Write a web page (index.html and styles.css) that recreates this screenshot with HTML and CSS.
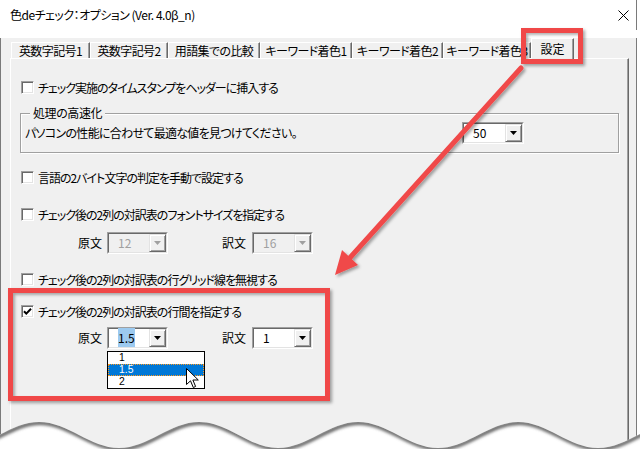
FILE: index.html
```html
<!DOCTYPE html>
<html lang="ja">
<head>
<meta charset="utf-8">
<link rel="stylesheet" href="styles.css">
</head>
<body>
<div class="window">
  <div class="titlebar">
    <span class="title">色deチェック：オプション (Ver. 4.0β_n)</span>
    <svg class="close" width="11" height="11" viewBox="0 0 11 11"><path d="M0.5 0.5L10.5 10.5M10.5 0.5L0.5 10.5" stroke="#000" stroke-width="1" fill="none"/></svg>
  </div>
  <div class="client">
    <div class="tabstrip">
      <div class="tab w79">英数字記号1</div>
      <div class="tab w78">英数字記号2</div>
      <div class="tab w92">用語集での比較</div>
      <div class="tab w92">キーワード着色1</div>
      <div class="tab w91">キーワード着色2</div>
      <div class="tab w88">キーワード着色3</div>
      <div class="tab sel w43">設定</div>
    </div>
    <div class="panel">
      <div class="cb r1"><span class="box"></span><span class="lbl">チェック実施のタイムスタンプをヘッダーに挿入する</span></div>
      <div class="group">
        <span class="legend">処理の高速化</span>
        <span class="gtext">パソコンの性能に合わせて最適な値を見つけてください。</span>
        <div class="combo w62"><div class="inner"><span class="val">50</span><span class="btn"><svg width="7" height="4" viewBox="0 0 7 4"><path d="M0 0H7L3.5 4Z" fill="#000"/></svg></span></div></div>
      </div>
      <div class="cb r3"><span class="box"></span><span class="lbl">言語の2バイト文字の判定を手動で設定する</span></div>
      <div class="cb r4"><span class="box"></span><span class="lbl">チェック後の2列の対訳表のフォントサイズを指定する</span></div>
      <div class="opt o1">
        <span class="olbl">原文</span>
        <div class="combo dis"><div class="inner"><span class="val">12</span><span class="btn"><svg width="7" height="4" viewBox="0 0 7 4"><path d="M0 0H7L3.5 4Z" fill="#a0a0a0"/></svg></span></div></div>
        <span></span>
        <span class="olbl">訳文</span>
        <div class="combo dis"><div class="inner"><span class="val">16</span><span class="btn"><svg width="7" height="4" viewBox="0 0 7 4"><path d="M0 0H7L3.5 4Z" fill="#a0a0a0"/></svg></span></div></div>
      </div>
      <div class="cb r5"><span class="box"></span><span class="lbl">チェック後の2列の対訳表の行グリッド線を無視する</span></div>
      <div class="cb r6"><span class="box"><svg width="11" height="11" viewBox="0 0 11 11"><path d="M2 5.2L4.3 7.6L9 2.8" stroke="#000" stroke-width="2" fill="none"/></svg></span><span class="lbl">チェック後の2列の対訳表の行間を指定する</span></div>
      <div class="opt o2">
        <span class="olbl">原文</span>
        <div class="combo open"><div class="inner"><span class="val"><span class="hl">1.5</span></span><span class="btn"><svg width="7" height="4" viewBox="0 0 7 4"><path d="M0 0H7L3.5 4Z" fill="#000"/></svg></span></div>
          <div class="list">
            <div class="item">1</div>
            <div class="item cur">1.5</div>
            <div class="item">2</div>
            <svg class="cursor" width="14" height="21" viewBox="0 0 14 21"><path d="M0.5 0.5V16.5L4.5 12.8L7.3 19.5L9.6 18.5L6.9 12H12.3Z" fill="#fff" stroke="#000" stroke-width="1" stroke-linejoin="miter"/></svg>
          </div>
        </div>
        <span></span>
        <span class="olbl">訳文</span>
        <div class="combo"><div class="inner"><span class="val">1</span><span class="btn"><svg width="7" height="4" viewBox="0 0 7 4"><path d="M0 0H7L3.5 4Z" fill="#000"/></svg></span></div></div>
      </div>
    </div>
  </div>

  <div class="redbox rb-tab"></div>
  <div class="redbox rb-main"></div>
  <svg class="overlay" width="640" height="449" viewBox="0 0 640 449">
    <defs>
      <filter id="sh" x="-20%" y="-20%" width="140%" height="140%">
        <feDropShadow dx="2" dy="2" stdDeviation="1.5" flood-color="#000" flood-opacity="0.35"/>
      </filter>
      <filter id="blur"><feGaussianBlur stdDeviation="1.6"/></filter>
      <clipPath id="below">
        <path d="M-41 448C-12 448 10 422 39 422C68 422 90 448 119 448C148 448 170 422 199 422C228 422 249 448 278 448C307 448 329 422 358 422C387 422 409 448 438 448C467 448 489 422 518 422C547 422 569 448 598 448C627 448 649 422 678 422L678 470L-41 470Z"/>
      </clipPath>
    </defs>
    <g filter="url(#sh)">
      <line x1="521" y1="68" x2="347" y2="261" stroke="#f04848" stroke-width="5" stroke-linecap="round"/>
      <path d="M335 275L358 265L342 250Z" fill="#f04848"/>
    </g>
    <path d="M-41 448C-12 448 10 422 39 422C68 422 90 448 119 448C148 448 170 422 199 422C228 422 249 448 278 448C307 448 329 422 358 422C387 422 409 448 438 448C467 448 489 422 518 422C547 422 569 448 598 448C627 448 649 422 678 422L678 470L-41 470Z" fill="#fff"/>
    <g clip-path="url(#below)">
      <path d="M-41 448C-12 448 10 422 39 422C68 422 90 448 119 448C148 448 170 422 199 422C228 422 249 448 278 448C307 448 329 422 358 422C387 422 409 448 438 448C467 448 489 422 518 422C547 422 569 448 598 448C627 448 649 422 678 422" transform="translate(1 1)" stroke="#666" stroke-width="4" fill="none" filter="url(#blur)"/>
    </g>
  </svg>
</div>
</body>
</html>
```

FILE: styles.css
```css
* { box-sizing: border-box; margin: 0; padding: 0; }
html, body { width: 640px; height: 449px; overflow: hidden; background: #fff; }
body {
  font-family: "Noto Sans CJK JP", "Noto Sans", sans-serif;
  font-size: 12px;
  color: #000;
  font-feature-settings: "palt";
}
.window { position: relative; width: 640px; height: 449px; background: #fff; }

.titlebar {
  width: 637px; height: 30px;
  display: flex; align-items: center;
  padding-left: 10px;
  background: #fff;
  border-right: 1px solid #7a7a7a;
}
.title { flex: 1; font-size: 12px; line-height: 14px; letter-spacing: -0.5px; }
.close { margin-right: 7px; }

.client {
  width: 637px; height: 419px;
  background: #f0f0f0;
  border-left: 1px solid #7a7a7a;
  border-right: 1px solid #7a7a7a;
}

.tabstrip {
  display: flex; align-items: flex-end;
  height: 20px; margin-top: 8px; margin-left: 10px;
  position: relative; z-index: 1;
}
.tab {
  height: 16px; line-height: 15px;
  text-align: center; white-space: nowrap; overflow: hidden;
  letter-spacing: -0.6px;
  border-top: 1px solid #fff;
  border-left: 1px solid #fff;
  border-right: 1px solid #696969;
  box-shadow: inset -1px 0 #a0a0a0;
  background: #f0f0f0;
}
.tab.sel { height: 21px; margin-bottom: -1px; line-height: 19px; letter-spacing: 0; }
.w79 { width: 79px; } .w78 { width: 78px; } .w92 { width: 92px; }
.w91 { width: 91px; } .w88 { width: 88px; } .w43 { width: 43px; }
.w62 { width: 62px; }

.panel {
  margin-left: 9px; width: 619px; height: 391px;
  border-top: 1px solid #fff;
  border-left: 1px solid #fff;
  border-right: 1px solid #696969;
  box-shadow: inset -1px 0 #a0a0a0;
  padding: 22px 0 0 10px;
}

.cb { display: flex; align-items: center; height: 13px; }
.box {
  width: 13px; height: 13px; flex: none;
  background: #fff;
  border: 1px solid; border-color: #a0a0a0 #fff #fff #a0a0a0;
  box-shadow: inset 1px 1px #696969, inset -1px -1px #e3e3e3;
  display: flex;
}
.box svg { display: block; }
.lbl { margin-left: 4px; line-height: 13px; white-space: nowrap; letter-spacing: -1px; }
.r3 { margin-top: 18px; }
.r4 { margin-top: 24px; }
.r5 { margin-top: 19px; }
.r6 { margin-top: 19px; }

.group {
  margin-top: 19px; margin-left: -1px;
  width: 599px; height: 40px;
  border: 1px solid #a0a0a0;
  box-shadow: inset 1px 1px #fff, 1px 1px #fff;
  position: relative;
  display: flex; align-items: center;
  padding: 0 94px 0 4px;
}
.legend {
  position: absolute; left: 9px; top: -8px;
  padding: 0 3px; background: #f0f0f0; line-height: 14px;
  letter-spacing: -0.4px;
}
.gtext { flex: 1; white-space: nowrap; line-height: 14px; letter-spacing: -0.7px; }

.combo {
  width: 61px; height: 22px; position: relative;
  border: 1px solid; border-color: #a0a0a0 #fff #fff #a0a0a0;
}
.group .combo { width: 62px; }
.inner {
  height: 20px; display: flex;
  border: 1px solid; border-color: #696969 #e3e3e3 #e3e3e3 #696969;
  background: #fff;
}
.val { flex: 1; padding-left: 9px; line-height: 18px; font-size: 12px; }
.btn {
  width: 17px; height: 18px; flex: none;
  background: #f0f0f0;
  border: 1px solid; border-color: #e3e3e3 #696969 #696969 #e3e3e3;
  box-shadow: inset 1px 1px #fff, inset -1px -1px #a0a0a0;
  display: flex; align-items: center; justify-content: center;
}
.btn svg { display: block; }
.combo.dis .inner { background: #f0f0f0; }
.combo.dis .val { color: #a0a0a0; }
.hl { background: #9ccaf0; padding: 1px 0; }

.opt {
  display: grid;
  grid-template-columns: 29px 61px 54px 30px 62px;
  align-items: center;
  height: 22px; padding-left: 57px;
}
.o1 { margin-top: 11px; }
.o2 { margin-top: 9px; }
.olbl { line-height: 14px; }

.list {
  position: absolute; left: -1px; top: 23px;
  width: 98px; height: 38px;
  border: 1px solid #000; background: #fff;
  z-index: 2;
}
.item {
  height: 12px; line-height: 12px; padding-left: 11px;
  font-family: "Liberation Sans", "Noto Sans", sans-serif;
  font-size: 10.4px;
}
.item.cur {
  background: #0078d7; color: #fff;
  outline: 1px dotted #ff9a1f; outline-offset: -1px;
}
.cursor { position: absolute; left: 78px; top: 16px; }

.redbox {
  position: absolute;
  border: 5px solid #f04848;
  box-shadow: 2px 2px 3px rgba(0,0,0,0.35), inset 2px 2px 3px rgba(0,0,0,0.3);
  z-index: 5;
}
.rb-tab { left: 521px; top: 28px; width: 62px; height: 36px; }
.rb-main { left: 8px; top: 288px; width: 322px; height: 113px; }
.overlay { position: absolute; left: 0; top: 0; z-index: 6; pointer-events: none; }
```
